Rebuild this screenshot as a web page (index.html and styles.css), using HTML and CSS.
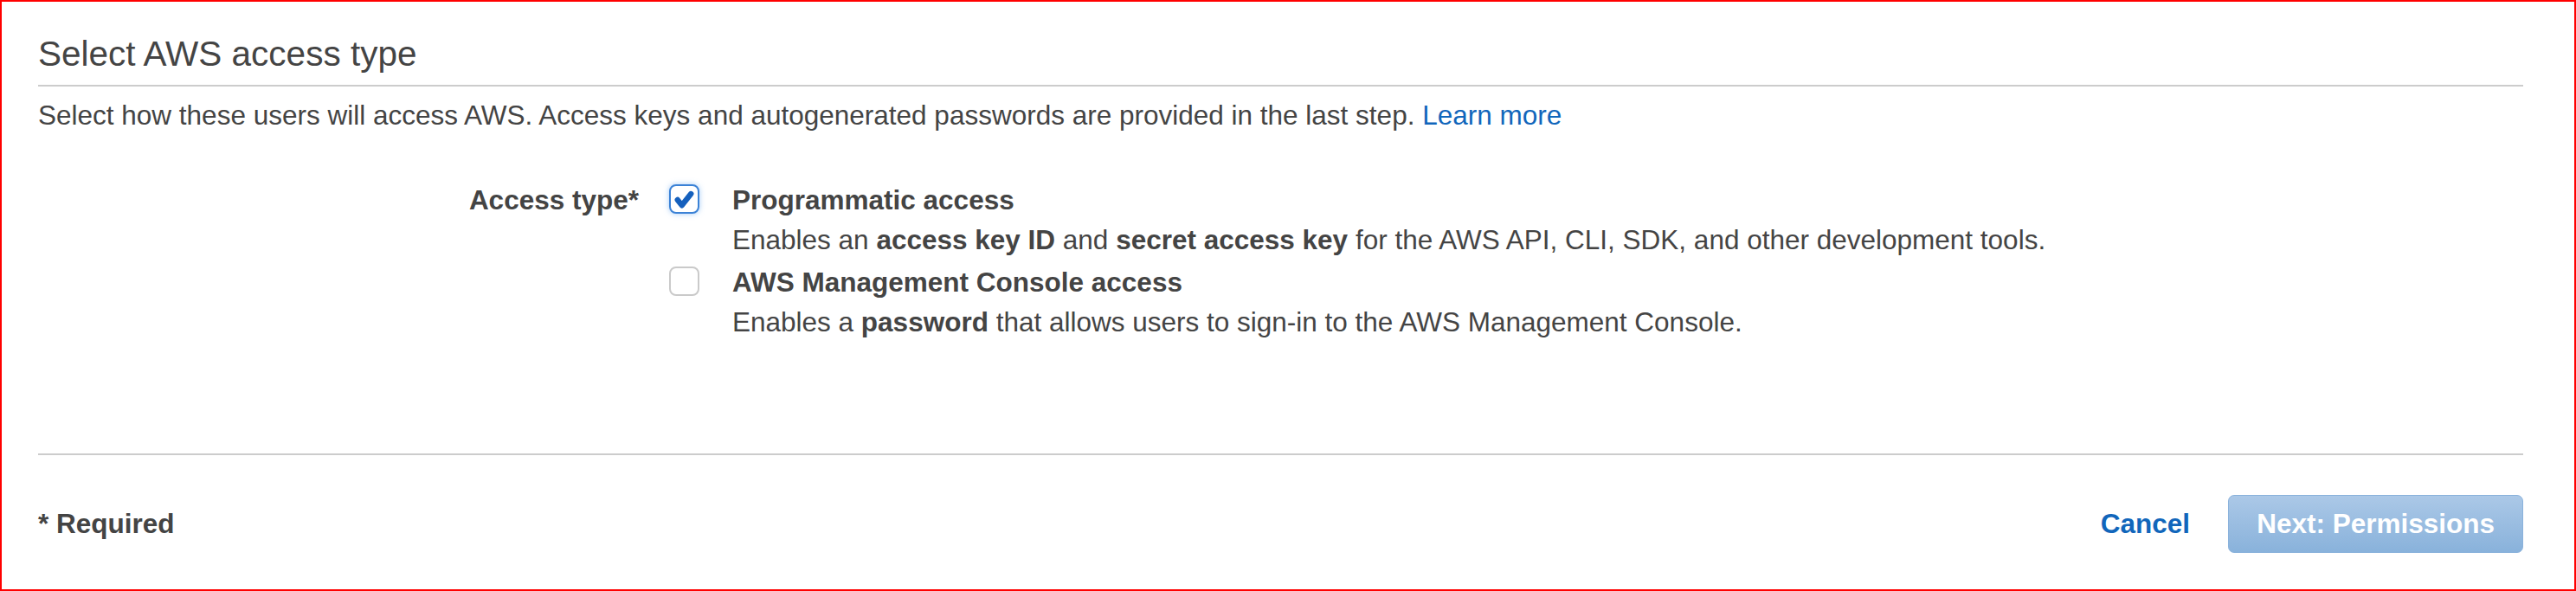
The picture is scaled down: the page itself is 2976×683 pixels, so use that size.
FILE: index.html
```html
<!DOCTYPE html>
<html lang="en">
<head>
<meta charset="utf-8">
<title>Select AWS access type</title>
<link rel="stylesheet" href="styles.css">
</head>
<body>
<div class="frame">
  <div class="section-head">
    <h2 class="section-title">Select AWS access type</h2>
  </div>
  <p class="intro">Select how these users will access AWS. Access keys and autogenerated passwords are provided in the last step. <a class="link" href="#">Learn more</a></p>

  <div class="form-row">
    <div class="form-label">Access type*</div>
    <div class="options">
      <div class="option">
        <span class="checkbox checked">
          <svg viewBox="0 0 34 34" width="34" height="34"><path d="M8.5 18 L14 25 L25.5 10.5" fill="none" stroke="#1560bd" stroke-width="7" stroke-linecap="round" stroke-linejoin="round"/></svg>
        </span>
        <div class="option-text">
          <div class="option-title">Programmatic access</div>
          <div class="option-desc">Enables an <b>access key ID</b> and <b>secret access key</b> for the AWS API, CLI, SDK, and other development tools.</div>
        </div>
      </div>
      <div class="option">
        <span class="checkbox"></span>
        <div class="option-text">
          <div class="option-title">AWS Management Console access</div>
          <div class="option-desc">Enables a <b>password</b> that allows users to sign-in to the AWS Management Console.</div>
        </div>
      </div>
    </div>
  </div>

  <div class="footer">
    <div class="required">* Required</div>
    <div class="actions">
      <a class="cancel" href="#">Cancel</a>
      <button class="btn-primary" type="button">Next: Permissions</button>
    </div>
  </div>
</div>
</body>
</html>
```

FILE: styles.css
```css
html, body {
  margin: 0;
  padding: 0;
  background: #fff;
}

body {
  font-family: "Liberation Sans", Arial, sans-serif;
  color: #444;
}

.frame {
  box-sizing: border-box;
  width: 2976px;
  height: 683px;
  border: 2px solid #ff0000;
  padding: 36px 59px 0 42px;
}

.section-head {
  border-bottom: 2px solid #cccccc;
  height: 60px;
}

.section-title {
  margin: 0;
  font-size: 40.5px;
  line-height: 48px;
  font-weight: normal;
  color: #444;
}

.intro {
  margin: 11px 0 0 0;
  font-size: 31.5px;
  line-height: 44px;
}

.link {
  color: #1166bb;
  text-decoration: none;
}

.form-row {
  display: flex;
  margin-top: 53px;
  font-size: 31.5px;
  line-height: 46px;
}

.form-label {
  width: 694px;
  text-align: right;
  font-weight: bold;
  flex: none;
}

.options {
  display: flex;
  flex-direction: column;
  gap: 3px;
  margin-left: 35px;
}

.option {
  display: flex;
  align-items: flex-start;
}

.checkbox {
  box-sizing: border-box;
  flex: none;
  width: 35px;
  height: 34px;
  margin-top: 5px;
  border: 2px solid #cacaca;
  border-radius: 8px;
  background: #fff;
  display: flex;
  align-items: center;
  justify-content: center;
}

.checkbox.checked {
  border-color: #3b82d6;
  box-shadow: 0 0 6px rgba(90, 160, 240, 0.55);
}

.checkbox svg {
  display: block;
}

.option-text {
  margin-left: 38px;
}

.option-title {
  font-weight: bold;
}

.option-desc b {
  font-weight: bold;
}

.footer {
  margin-top: 129px;
  border-top: 2px solid #cccccc;
  padding-top: 46px;
  display: flex;
  justify-content: space-between;
  align-items: center;
  font-size: 31.5px;
}

.required {
  font-weight: bold;
}

.actions {
  display: flex;
  align-items: center;
  gap: 44px;
}

.cancel {
  color: #1166bb;
  font-weight: bold;
  text-decoration: none;
}

.btn-primary {
  box-sizing: border-box;
  height: 67px;
  padding: 0 32px;
  border: 1px solid #8ab2dc;
  border-radius: 7px;
  background: linear-gradient(#abc8e7, #89b2db);
  color: #fff;
  font-family: "Liberation Sans", Arial, sans-serif;
  font-size: 31.5px;
  font-weight: bold;
  cursor: default;
}
```
